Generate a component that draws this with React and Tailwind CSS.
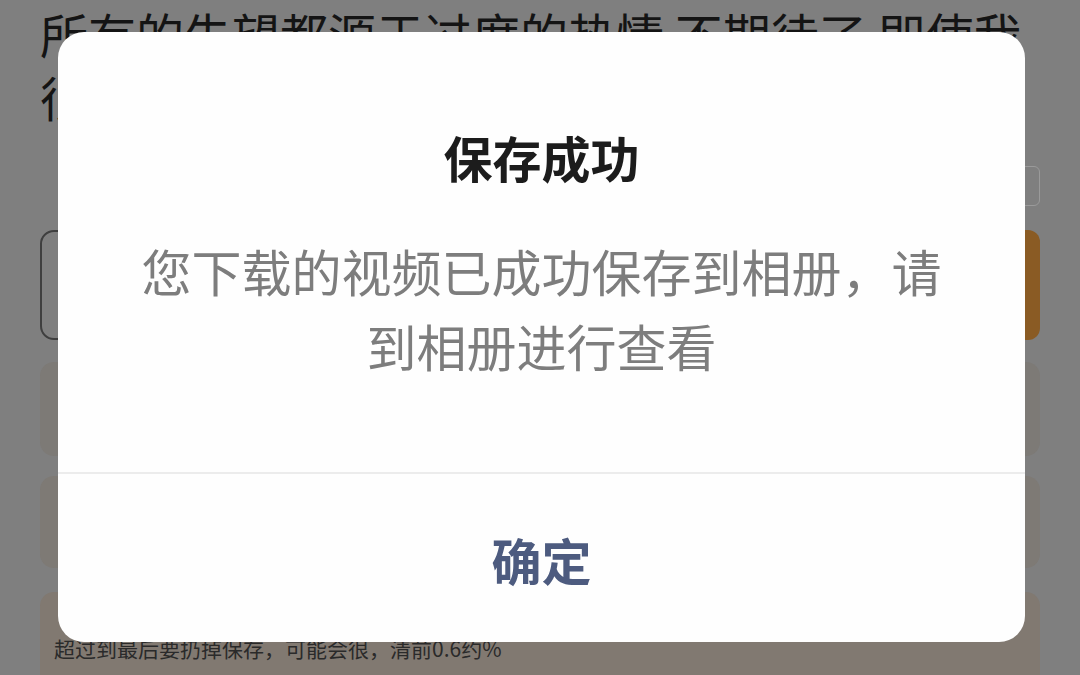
import React from 'react';

const cjk = { fontFamily: '"Noto Sans CJK SC", "Noto Sans", sans-serif' };

function BackgroundPage() {
    return (
        <div className="flex flex-col px-[40px]">
            <div className="text-[48px] leading-[63px] text-[#141414] pt-[2px] whitespace-nowrap">
                <p>所有的失望都源于过度的热情 不期待了 即使我</p>
                <p>很难过也不会再说什么了</p>
            </div>

            <div className="flex justify-end mt-[38px]">
                <div className="w-[22px] h-[40px] border border-[#9a9a9a] rounded-[6px]" />
            </div>

            <div className="flex gap-[20px] mt-[24px] h-[110px]">
                <div className="flex-1 border-2 border-[#3f3f3f] rounded-[14px]" />
                <div className="w-[200px] bg-[#8a5b24] rounded-[12px]" />
            </div>

            <div className="mt-[22px] h-[94px] bg-[#7d7a76] rounded-[14px]" />
            <div className="mt-[20px] h-[92px] bg-[#7e7a75] rounded-[14px]" />
            <div className="mt-[24px] h-[100px] bg-[#817971] rounded-[14px] px-[14px] pt-[42px] text-[21px] leading-[28px] text-[#2a2a2a] whitespace-nowrap">
                超过到最后要扔掉保存，可能会很，清前0.6约%
            </div>
        </div>
    );
}

function SaveDialog() {
    return (
        <div className="absolute left-[58px] top-[32px] w-[967px] h-[610px] bg-[#fefefe] rounded-[26px] flex flex-col overflow-hidden">
            <div className="flex-1 flex flex-col items-center">
                <h1 className="mt-[95px] text-[49px] leading-[60px] font-bold text-[#1c1c1c]">保存成功</h1>
                <p className="mt-[46px] px-[40px] text-center text-[50px] leading-[75px] text-[#7d7d7d]">
                    您下载的视频已成功保存到相册，请
                    <br />
                    到相册进行查看
                </p>
            </div>
            <div className="h-[2px] bg-[#ececec]" />
            <button className="h-[168px] flex items-start justify-center pt-[55px] text-[50px] leading-[60px] font-bold text-[#4d5b7f]">
                确定
            </button>
        </div>
    );
}

export default function App() {
    return (
        <div style={cjk} className="relative w-[1080px] h-[675px] overflow-hidden bg-[#7f7f7f]">
            <BackgroundPage />
            <SaveDialog />
        </div>
    );
}
